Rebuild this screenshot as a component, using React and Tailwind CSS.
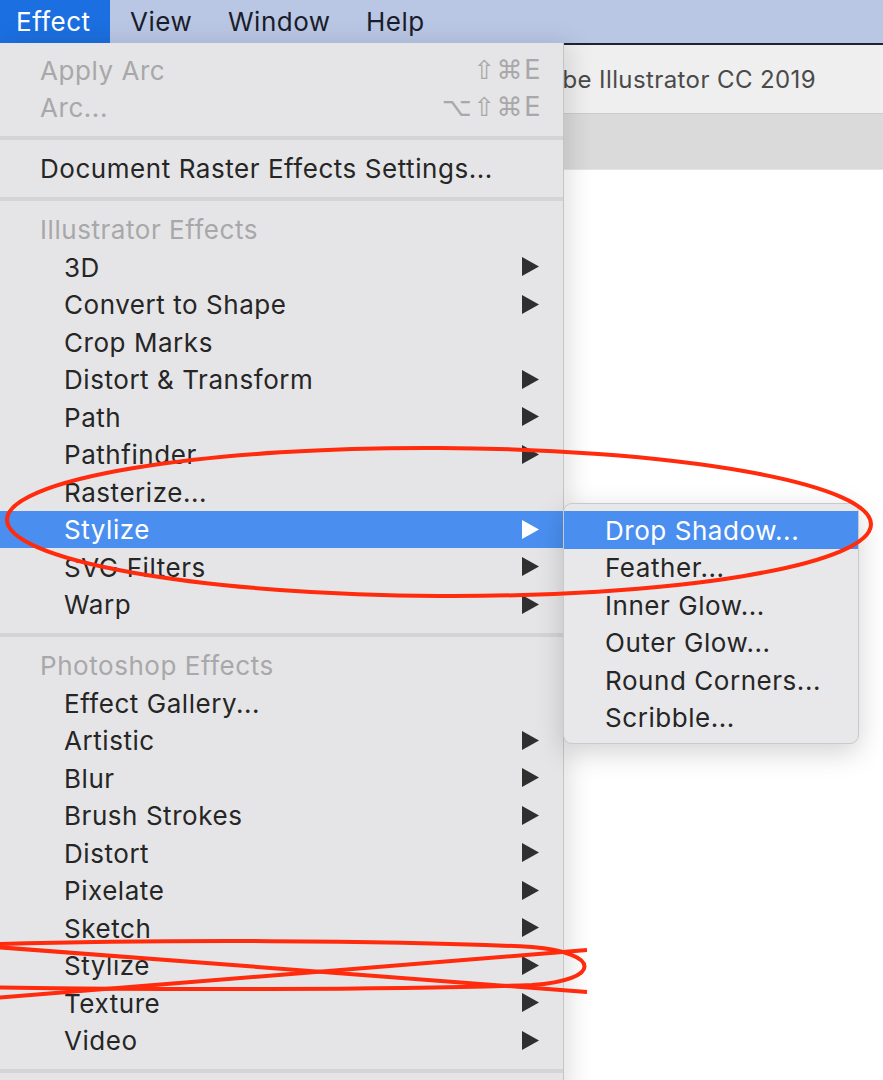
import React from 'react';

const FONT = { fontFamily: 'Inter, "Noto Sans", "DejaVu Sans", sans-serif' };

const mainItems = [
  { t: 'Apply Arc', disabled: true, sc: '⇧⌘E' },
  { t: 'Arc...', disabled: true, sc: '⌥⇧⌘E' },
  'sep',
  { t: 'Document Raster Effects Settings...' },
  'sep',
  { t: 'Illustrator Effects', disabled: true },
  { t: '3D', indent: true, sub: true },
  { t: 'Convert to Shape', indent: true, sub: true },
  { t: 'Crop Marks', indent: true },
  { t: 'Distort & Transform', indent: true, sub: true },
  { t: 'Path', indent: true, sub: true },
  { t: 'Pathfinder', indent: true, sub: true },
  { t: 'Rasterize...', indent: true },
  { t: 'Stylize', indent: true, sub: true, active: true },
  { t: 'SVG Filters', indent: true, sub: true },
  { t: 'Warp', indent: true, sub: true },
  'sep',
  { t: 'Photoshop Effects', disabled: true },
  { t: 'Effect Gallery...', indent: true },
  { t: 'Artistic', indent: true, sub: true },
  { t: 'Blur', indent: true, sub: true },
  { t: 'Brush Strokes', indent: true, sub: true },
  { t: 'Distort', indent: true, sub: true },
  { t: 'Pixelate', indent: true, sub: true },
  { t: 'Sketch', indent: true, sub: true },
  { t: 'Stylize', indent: true, sub: true },
  { t: 'Texture', indent: true, sub: true },
  { t: 'Video', indent: true, sub: true },
  'sep',
];

const subItems = ['Drop Shadow...', 'Feather...', 'Inner Glow...', 'Outer Glow...', 'Round Corners...', 'Scribble...'];

const Arrow = ({ white }) => (
  <svg width="17" height="19" viewBox="0 0 17 19">
    <polygon points="0,0 17,9.5 0,19" fill={white ? '#ffffff' : '#2f2f2f'} />
  </svg>
);

const Separator = () => (
  <div className="h-[23.5px] flex items-center">
    <div className="h-[4px] w-full bg-[#d4d4d6]"></div>
  </div>
);

const MenuRow = ({ item }) => {
  const color = item.active ? 'text-white' : item.disabled ? 'text-[#a8a8aa]' : 'text-[#262626]';
  return (
    <div
      className={`h-[37.5px] flex items-center pr-[24px] ${item.indent ? 'pl-[64px]' : 'pl-[40px]'} ${
        item.active ? 'bg-[#4a8ff0]' : ''
      }`}
    >
      <span className={`flex-1 text-[26px] leading-none tracking-[0.55px] whitespace-nowrap pt-[2px] ${color}`}>{item.t}</span>
      {item.sc && (
        <span
          className="text-[26px] leading-none text-[#a8a8aa] mr-[-3px] tracking-[1.5px]"
          style={{ fontFamily: '"DejaVu Sans", sans-serif' }}
        >
          {item.sc}
        </span>
      )}
      {item.sub && <Arrow white={item.active} />}
    </div>
  );
};

const App = () => {
  return (
    <div className="relative w-[883px] h-[1080px] overflow-hidden bg-white" style={FONT}>
      {/* menu bar */}
      <div className="h-[43px] bg-[#b9c7e5] flex items-center text-[26px] tracking-[0.5px] text-[#1b1d2a]">
        <div className="h-full w-[110px] bg-[#1c6fe0] text-white flex items-center pl-[16px]">Effect</div>
        <div className="w-[98px] pl-[20px]">View</div>
        <div className="w-[138px] pl-[20px]">Window</div>
        <div className="pl-[20px]">Help</div>
      </div>

      {/* window behind */}
      <div className="border-t-[2px] border-[#1e2232]">
        <div className="h-[68px] bg-[#efefef] flex items-center justify-end pr-[67px] pt-[2px] text-[24px] tracking-[0.4px] text-[#4a4a4a]">
          be Illustrator CC 2019
        </div>
        <div className="h-[57px] bg-[#dadada] border-t border-[#cdcdcd] border-b border-b-[#e4e4e4]"></div>
        <div className="bg-white"></div>
      </div>

      {/* main dropdown */}
      <div className="absolute left-0 top-[43px] w-[564px] h-[1060px] bg-[#e5e5e7] border-r border-[#c4c4c6] shadow-[6px_0_24px_rgba(0,0,0,0.12)] pt-[8px]">
        {mainItems.map((item, i) => (item === 'sep' ? <Separator key={i} /> : <MenuRow key={i} item={item} />))}
      </div>

      {/* submenu */}
      <div className="absolute left-[563px] top-[503px] w-[296px] rounded-[9px] bg-[#e8e8ea] border border-[#c9c9cb] shadow-[0_8px_28px_rgba(0,0,0,0.18)] py-[7px]">
        {subItems.map((s, i) => (
          <div
            key={s}
            className={`h-[37.5px] flex items-center pl-[41px] pt-[2px] text-[26px] tracking-[0.55px] leading-none ${
              i === 0 ? 'bg-[#4a8ff0] text-white' : 'text-[#262626]'
            }`}
          >
            {s}
          </div>
        ))}
      </div>

      {/* red annotations */}
      <svg className="absolute inset-0 pointer-events-none" width="883" height="1080" viewBox="0 0 883 1080">
        <ellipse cx="439" cy="522" rx="432" ry="74" fill="none" stroke="#ff2b0c" strokeWidth="4" transform="rotate(0.3 439 522)" />
        <path d="M -30 945 C 150 939, 400 940, 532 947 C 602 953, 602 980, 532 985 C 400 990, 150 990, -30 987" fill="none" stroke="#ff2b0c" strokeWidth="4" />
        <path d="M -5 947 L 587 992" fill="none" stroke="#ff2b0c" strokeWidth="4" />
        <path d="M -5 998 L 587 950" fill="none" stroke="#ff2b0c" strokeWidth="4" />
      </svg>
    </div>
  );
};

export default App;
